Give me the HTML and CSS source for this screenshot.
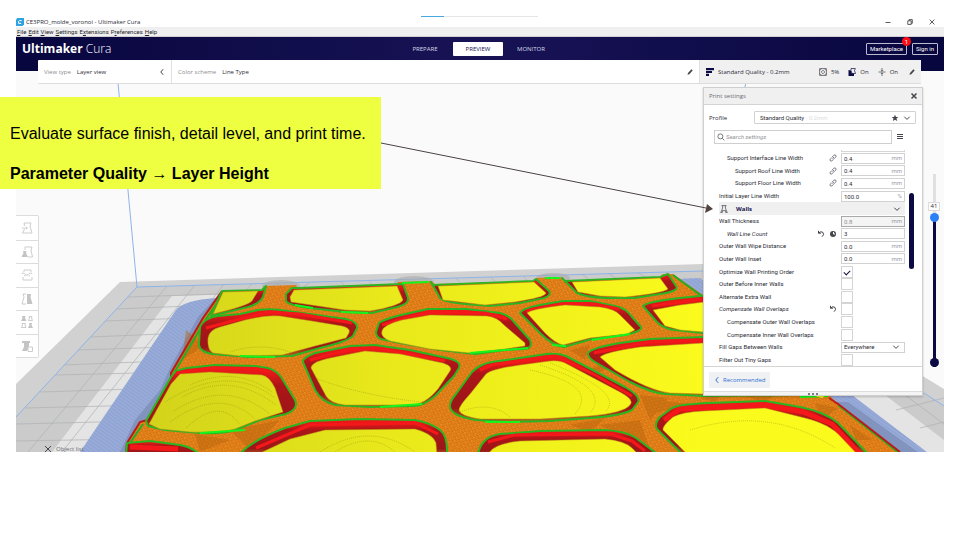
FILE: index.html
```html
<!DOCTYPE html>
<html lang="en">
<head>
<meta charset="utf-8">
<title>Ultimaker Cura – Print settings</title>
<link rel="stylesheet" href="styles.css">
</head>
<body>
<div class="slide">
  <div class="load-bar"></div>
  <div class="app">
    <div class="titlebar">
      <svg class="app-icon" viewBox="0 0 8 8"><path d="M1.5 0H8V6.500L6.500 8H0V1.500z" fill="#2ea3e0"/><path d="M5.600 2.600H3.400L2.600 3.400V5.400H5.200" fill="none" stroke="#fff"/></svg>
      <span class="window-title">CE3PRO_molde_voronoi - Ultimaker Cura</span>
      <div class="window-controls">
        <svg viewBox="0 0 6 6"><path d="M.5 3.500H5.500"/></svg>
        <svg viewBox="0 0 6 6"><path d="M.8 1.800H4.200V5.400H.8zM2 1.600V.6H5.300V4.300H4.300"/></svg>
        <svg viewBox="0 0 6 6"><path d="M.6.6 5.400 5.400M5.400.6.6 5.400"/></svg>
      </div>
    </div>
    <nav class="menubar">
      <a href="#"><u>F</u>ile</a><a href="#"><u>E</u>dit</a><a href="#"><u>V</u>iew</a><a href="#"><u>S</u>ettings</a><a href="#">E<u>x</u>tensions</a><a href="#">P<u>r</u>eferences</a><a href="#"><u>H</u>elp</a>
    </nav>
    <header class="header">
      <div class="brand"><b>Ultimaker</b> Cura</div>
      <div class="tabs">
        <button class="tab">PREPARE</button>
        <button class="tab tab-active">PREVIEW</button>
        <button class="tab">MONITOR</button>
      </div>
      <div class="account">
        <button class="outline-btn">Marketplace<span class="badge">1</span></button>
        <button class="outline-btn">Sign in</button>
      </div>
    </header>

    <main class="workspace">
      <svg class="scene" viewBox="16 71 928 381" preserveAspectRatio="xMidYMin slice" aria-hidden="true">
        <defs>
          <linearGradient id="floorTone" gradientUnits="userSpaceOnUse" x1="150" y1="400" x2="700" y2="380">
            <stop offset="0" stop-color="#d3d31b"/><stop offset=".45" stop-color="#e9e91b"/><stop offset="1" stop-color="#fafa1c"/>
          </linearGradient>
          <linearGradient id="wallTone" x1="0" y1="0" x2="0" y2="1">
            <stop offset="0" stop-color="#f41a1a"/><stop offset=".14" stop-color="#e01818"/><stop offset=".3" stop-color="#ac1518"/><stop offset=".8" stop-color="#9c1618"/><stop offset="1" stop-color="#b0701a"/>
          </linearGradient>
          <pattern id="skin" width="5" height="4" patternUnits="userSpaceOnUse" patternTransform="rotate(28)">
            <path d="M0 .5H3M2 2.500H5" stroke="#a94e08" stroke-opacity=".28"/><path d="M3 3.500H4" stroke="#ffb12c" stroke-opacity=".6"/>
          </pattern>
          <pattern id="brim" width="3" height="3" patternUnits="userSpaceOnUse" patternTransform="rotate(35)">
            <path d="M0 .5H3" stroke="#6f87c0" stroke-opacity=".25"/>
          </pattern>
          <clipPath id="bed"><path d="M137 287 703 271 738 270 944 406V452H16V417z"/></clipPath>
        </defs>
        <path class="bed-edge" d="M120 282 703 264H738L944 389V452H16V384z"/>
        <path class="bed-area" d="M137 287 703 271 738 270 944 406V452H16V417z"/>
        <g clip-path="url(#bed)">
          <path class="bed-light" d="M172 296 720 279 944 440V452H52z"/>
          <path class="bed-lines" d="M167 286 28 452M195 285 62 452M224 284 96 452M253 283 190 350M280 283 240 300M310 282 300 290M340 281 345 286M368 280 373 286M396 279 400 284M424 278 430 284M455 277 460 283M490 276 496 283M522 275 528 281M552 274 560 280M580 273 590 280M608 273 618 280M637 272 650 280M666 272 680 280M850 380 944 446M870 360 944 414M128 297 250 293M116 309 240 304M104 321 220 317M90 337 210 332M77 350 200 346M63 365 190 360M55 375 180 372M40 392 165 388M25 408 150 405M16 424 140 421M16 441 130 439M860 404 944 388M890 424 944 412M915 448 944 440"/>
        </g>
        <path class="brim" d="M80 452 176 310Q184 300 216 298L700 278 927 452z"/>
        <path class="brim-tex" d="M80 452 176 310Q184 300 216 298L700 278 927 452z"/>
        <path class="bed-light" d="M852 395H893L944 432V452H927z"/>
        <path class="bed-area" d="M885 395 944 440V406L927 395z"/>
        <path class="bed-lines" d="M905 395 944 424M896 410 944 398M920 428 944 422"/>
        <path class="brim-shade" d="M222 291 198 317 171 366 160 390 135 420 120 452H140L210 330zM838 402 848 402 918 452H900z"/>
        <path class="volume" d="M118 83 137 287M137 287 703 271M16 417 137 287M924 393 944 406M746 83 744 90"/>
        <ellipse class="post-shadow" cx="281" cy="286" rx="19" ry="6"/>
        <ellipse class="post-shadow" cx="414" cy="282" rx="20" ry="6"/>
        <ellipse class="post-shadow" cx="553" cy="278" rx="17" ry="5"/>
        <path class="body" d="M222 291 262 290 264 286 296 285 298 289 397 285 398 282 431 281 435 284 534 281 536 278 560 277 565 281 660 277 663 274 673 274 703 295 800 366 838 404 900 452H126L128 443 140 422 147 419 171 381V373L203 318z"/>
        <path class="body-skin" d="M222 291 262 290 264 286 296 285 298 289 397 285 398 282 431 281 435 284 534 281 536 278 560 277 565 281 660 277 663 274 673 274 703 295 800 366 838 404 900 452H126L128 443 140 422 147 419 171 381V373L203 318z"/>
        <path class="facets" d="M560 380 640 350 600 372zM640 395 668 398 650 420zM655 400 690 404 650 415zM640 420 600 425 650 450zM700 398 720 396 715 402zM745 396 775 396 762 402zM815 403 838 408 822 420zM850 425 872 440 856 440zM570 350 590 345 585 360zM570 425 605 418 590 432zM186 330 205 345 182 360zM195 434 230 440 200 452zM230 430 280 420 250 450z"/>
        <path class="side-red" d="M222 291 203 318 171 373V381L147 420 140 422 127 443 126 452"/>
        <path class="side-green" d="M224 293 206 319 174 373M171 382 149 421M143 424 130 443M673 275 703 297M838 405 898 452"/>
        <path class="side-red" d="M837 403 900 452M829 398 838 404"/>
        <g class="rims">
          <path d="M222 291 262 290 266 286 263 297Q259 304 248 307L211 316z"/>
          <path d="M298 288 292 288 286 294V301Q288 305 310 308L345 312 372 313 397 307Q409 304 408 298L403 284z"/>
          <path d="M431 282 440 298Q443 302 465 304L490 306 520 303 544 298Q552 295 549 291L536 279 533 281 433 285z"/>
          <path d="M562 278 577 293Q585 297 605 298L635 298 660 294Q680 291 676 286L668 274 660 277 565 281z"/>
          <path d="M199 345 200 327Q204 318 218 316L240 314 258 310Q272 308 288 311L346 319Q358 322 357 328L353 336Q346 342 320 348L292 356 250 357 212 354Q200 352 199 345z"/>
          <path d="M376 332 379 323Q386 318 410 313L428 309 467 309 500 313Q509 315 514 322L530 340Q533 348 525 349L505 350 475 354 440 350 400 343 381 339Q376 337 376 332z"/>
          <path d="M520 313Q523 308 540 305L563 301 590 301 615 306Q626 308 632 317L641 327Q643 331 625 335L592 339 564 347Q553 346 541 334z"/>
          <path d="M643 306Q646 302 680 298L720 294 780 350 703 333 675 330Q664 329 657 322z"/>
          <path d="M588 353Q591 348 620 343L650 339 703 337 780 350 800 395 703 396 665 394Q652 393 630 382L595 362Q587 357 588 353z"/>
          <path d="M171 377Q174 370 187 368L215 365 255 366 268 368Q277 371 281 377L295 400Q299 409 286 414L260 420 235 430Q223 434 200 433L165 430 148 426 146 421z"/>
          <path d="M303 362Q302 358 315 353L350 346 375 345 410 350 447 358Q462 361 459 368L454 376 435 396Q423 407 410 406L370 407 335 405Q322 402 315 390z"/>
          <path d="M450 406Q450 401 456 394L472 372Q480 364 492 362L540 355Q556 352 566 356L625 387Q641 396 638 402L632 410Q620 416 590 418L550 421 505 422 476 420Q450 416 450 406z"/>
          <path d="M238 456Q250 441 285 428L310 421 360 419 415 420Q431 423 440 430 448 436 447 456z"/>
          <path d="M478 456Q480 437 500 434L540 431 605 430Q625 431 636 438L660 456z"/>
          <path d="M684 456 657 429Q654 424 660 417L672 408Q680 404 710 403L765 401 800 407Q825 412 838 423L870 456z"/>
          <path d="M127 443 150 441 180 445Q192 447 202 456H126z"/>
        </g>
        <g class="walls-bright">
          <path d="M206 328 240 319 270 312 300 314 352 323"/>
          <path d="M382 325 410 317 432 312 485 313 507 319"/>
          <path d="M526 311 563 304 595 304 619 309"/>
          <path d="M652 306 703 299"/><path d="M594 353 650 342 705 340"/>
          <path d="M176 373 213 368 258 369 270 372"/>
          <path d="M310 360 348 350 375 348 445 361"/>
          <path d="M480 370 492 365 556 356 595 375 632 396"/>
          <path d="M256 448 310 425 415 423 438 434"/>
          <path d="M488 442 515 435 610 434 632 441 645 451"/>
          <path class="wide" d="M664 420 680 409 765 405 803 412 832 424 862 456"/>
          <path class="wide" d="M130 447 178 449"/>
        </g>
        <g class="floors">
          <path d="M223 292 258 291 252 301Q247 306 213 314z"/>
          <path d="M294 290 397 286 403 300Q400 306 370 311L345 310 291 302 290 297z"/>
          <path d="M438 286 534 282 546 293Q546 297 515 302L485 305 443 300z"/>
          <path d="M572 282 660 278 668 289Q664 293 625 297L600 296 578 292z"/>
          <path d="M208 338Q209 330 220 327L245 320Q265 315 280 316L312 321 342 326Q351 328 349 333L346 338 315 346 282 355 240 356 213 353Q207 350 208 338z"/>
          <path d="M382 331Q383 325 402 320L430 315 487 316Q497 317 504 325L525 343 525 346 505 349 470 353 430 349 390 341Q380 337 382 331z"/>
          <path d="M527 313Q531 309 565 305L600 307Q615 309 620 315L635 330 627 334 590 338 563 345Q555 343 545 333z"/>
          <path d="M653 310 680 305 720 300 770 345 703 332 680 330 665 326z"/>
          <path d="M600 357Q605 352 640 347L703 343 790 360V394H703L670 393Q650 391 615 370z"/>
          <path d="M180 374 210 372 262 375Q269 376 275 388L283 412 255 421 235 429Q220 433 190 432L160 429 149 424 171 384z"/>
          <path d="M311 368Q311 362 330 358L365 351 400 354 443 363Q453 366 450 371L438 389Q425 405 410 405L345 405Q330 403 326 396z"/>
          <path d="M459 410Q459 406 470 394L486 374Q491 369 520 365L550 361Q560 360 567 364L620 392Q635 400 630 405 624 413 590 416L540 419 480 419Q460 416 459 410z"/>
          <path d="M254 456 290 439 325 430 415 429Q433 434 436 443L437 456z"/>
          <path d="M488 456Q490 444 520 441L605 439Q625 441 632 448L640 456z"/>
          <path d="M689 456 663 430Q662 426 673 417 682 412 703 411L765 408 805 418Q830 424 841 437L859 456z"/>
        </g>
        <g class="floor-rings">
          <path d="M190 385Q235 365 272 392M182 397Q230 370 276 405M174 411Q225 378 270 414M170 422Q220 386 255 419M165 402Q228 362 275 398M186 428Q220 396 240 425M230 352Q260 342 290 352M315 378Q360 395 420 402M460 412Q490 400 510 417M320 452Q370 420 415 452M335 452Q370 430 395 452M530 370Q600 385 575 414M540 365Q612 388 590 413M550 363Q624 392 606 411M690 430Q770 405 835 448"/>
        </g>
        <path class="lime" d="M295 305 313 308M341 312 368 313M240 356 275 357M200 433 245 430M470 353 528 348M552 345 566 346M592 340 630 334M485 422 520 422M380 407 422 404M402 283 429 282M545 278 560 278M800 397 828 396"/>
        <path class="corner-yellow" d="M812 395H826L822 398z"/>
      </svg>

      <div class="toolbar">
        <button class="bar-section view-type"><span class="muted">View type</span><span>Layer view</span>
          <svg class="icon push" viewBox="0 0 8 8"><path d="M5.200 1.200 2.800 4 5.200 6.800"/></svg></button>
        <button class="bar-section color-scheme"><span class="muted">Color scheme</span><span>Line Type</span>
          <svg class="icon push" viewBox="0 0 8 8"><path class="solid" d="M1.500 6.700 2 4.900 5.400 1.300 6.700 2.600 3.300 6.200z"/></svg></button>
        <button class="bar-section quality">
          <svg class="icon navy" viewBox="0 0 8 8"><path class="solid" d="M0 0H8V2.200H0zM0 3H6V5H0zM0 5.800H3V8H0z"/></svg>
          <span class="quality-name">Standard Quality - 0.2mm</span>
          <svg class="icon" viewBox="0 0 8 8"><path class="fine" d="M.6.6H7.400V7.400H.6zM.6 2.600 2.600.6M5.400.6 7.400 2.600M.6 5.400 2.600 7.400M7.400 5.400 5.400 7.400M4 2.200 5.800 4 4 5.800 2.200 4z"/></svg><span>5%</span>
          <svg class="icon navy gap" viewBox="0 0 8 8"><path class="solid" d="M.5 2 2.800 2.600 3.800 5.500H6V8H.5z"/><path class="fine" d="M3 .5H7.300L6.500 2.500 7.500 5.500H4L3 2.500z"/></svg><span>On</span>
          <svg class="icon gap" viewBox="0 0 8 8"><path class="fine" d="M.5 4H7.500M4 0V3M2.800 2 4 3.200 5.200 2M4 8V5M2.800 6 4 4.800 5.200 6"/></svg><span>On</span>
          <svg class="icon edit" viewBox="0 0 8 8"><path class="solid" d="M1.500 6.700 2 4.900 5.400 1.300 6.700 2.600 3.300 6.200z"/></svg>
        </button>
      </div>

      <div class="columns">
        <div class="tools">
          <button aria-label="Move"><svg viewBox="0 0 12 12"><path d="M3 1H10L9 4 11 11H1.500L3.500 7M3 1 3.500 4M1 6H6M5 4.800 6.500 6 5 7.200"/></svg></button>
          <button aria-label="Scale"><svg viewBox="0 0 12 12"><path d="M4 1H11L10 4 11.500 11H7M4 1V4"/><path class="solid" d="M2 5H5.500L5 7 7 11H.5L2.500 7z"/></svg></button>
          <button aria-label="Rotate"><svg viewBox="0 0 12 12"><path d="M3 3V1H10V3M2 8V11H11V8M4 6H7M.5 5A2 1.500 0 1 1 3 7M11.500 5A2 1.500 0 1 0 9 7"/></svg></button>
          <button aria-label="Mirror"><svg viewBox="0 0 12 12"><path d="M5 1H2L3 4 1 11H5"/><path class="solid" d="M6 1H10L9.500 4 11.500 11H6z"/></svg></button>
          <button aria-label="Per model settings"><svg viewBox="0 0 12 12"><path class="solid" d="M1 0H4.500L4 2 5.500 5H0L1.500 2zM8 7H11L10.500 9 12 12H7L8.500 9z"/><path d="M8 .5H11L10.500 2 11.500 4.500H7.500L8.500 2zM1 7.500H4.500L4 9 5 11.500H.5L1.500 9z"/></svg></button>
          <button aria-label="Support blocker"><svg viewBox="0 0 12 12"><path class="solid" d="M1 1H9V3H8V7L6 11H1L3 7V3H1z"/><path class="cut" d="M7 7H11.500V11.500H7z"/></svg></button>
        </div>

        <section class="panel">
          <div class="panel-head"><h2>Print settings</h2>
            <button aria-label="Close" class="plain"><svg class="icon" viewBox="0 0 8 8"><path class="bold" d="M1.500 1.500 6.500 6.500M6.500 1.500 1.500 6.500"/></svg></button></div>
          <div class="profile-row">
            <span class="profile-label">Profile</span>
            <button class="profile-select"><span>Standard Quality <i>- 0.2mm</i></span>
              <svg class="icon push" viewBox="0 0 8 8"><path class="solid" d="M4 .8 5 3H7.400L5.500 4.600 6.200 7 4 5.700 1.800 7 2.500 4.600.6 3H3z"/></svg>
              <svg class="icon" viewBox="0 0 8 8"><path d="M1.300 2.700 4 5.400 6.700 2.700"/></svg></button>
          </div>
          <div class="search-row">
            <label class="search"><svg class="icon" viewBox="0 0 8 8"><circle cx="3.400" cy="3.400" r="2.500"/><path d="M5.300 5.300 7.400 7.400"/></svg><input type="text" aria-label="Search settings" placeholder="Search settings"></label>
            <button aria-label="Setting visibility" class="plain"><svg class="icon" viewBox="0 0 8 8"><path d="M1 1.500H7M1 3.500H7M1 5.500H7"/></svg></button>
          </div>
          <div class="list-wrap">
            <div class="clipped-field"></div>
            <div class="list">
              <div class="row in1"><label for="f1">Support Interface Line Width</label><svg class="icon" viewBox="0 0 8 8"><path class="fine" d="M3.500 4.500 5 3M3.200 3 4.800 1.300Q6 .5 6.800 1.300 7.500 2.200 6.600 3.200L5 4.800M3 3.400 1.400 5Q.6 6 1.300 6.800 2.200 7.500 3.200 6.600L4.800 5"/></svg><span class="field"><input id="f1" value="0.4"><em>mm</em></span></div>
              <div class="row in2"><label for="f2">Support Roof Line Width</label><svg class="icon" viewBox="0 0 8 8"><path class="fine" d="M3.500 4.500 5 3M3.200 3 4.800 1.300Q6 .5 6.800 1.300 7.500 2.200 6.600 3.200L5 4.800M3 3.400 1.400 5Q.6 6 1.300 6.800 2.200 7.500 3.200 6.600L4.800 5"/></svg><span class="field"><input id="f2" value="0.4"><em>mm</em></span></div>
              <div class="row in2"><label for="f3">Support Floor Line Width</label><svg class="icon" viewBox="0 0 8 8"><path class="fine" d="M3.500 4.500 5 3M3.200 3 4.800 1.300Q6 .5 6.800 1.300 7.500 2.200 6.600 3.200L5 4.800M3 3.400 1.400 5Q.6 6 1.300 6.800 2.200 7.500 3.200 6.600L4.800 5"/></svg><span class="field"><input id="f3" value="0.4"><em>mm</em></span></div>
              <div class="row"><label for="f4">Initial Layer Line Width</label><span class="field"><input id="f4" value="100.0"><em>%</em></span></div>
              <button class="category"><svg class="icon" viewBox="0 0 8 8"><path class="fine" d="M1.500.6H6.500M2.600.6V3L1 7.400M5.400.6V3L7 7.400M.4 7.400H2.400V5.600H5.600V7.400H7.600"/></svg><b>Walls</b><svg class="icon push" viewBox="0 0 8 8"><path d="M1.300 2.700 4 5.400 6.700 2.700"/></svg></button>
              <div class="row"><label for="f5">Wall Thickness</label><span class="field disabled"><input id="f5" value="0.8"><em>mm</em></span></div>
              <div class="row in1 changed"><label for="f6">Wall Line Count</label><svg class="icon" viewBox="0 0 8 8"><path d="M1.500.8V3.200H4M1.600 3Q4 .6 6 2.500 7.600 4.800 5 6.700"/></svg><svg class="icon" viewBox="0 0 8 8"><circle class="solid" cx="4" cy="4" r="3"/><path class="knock" d="M4.500 2V4H6"/></svg><span class="field"><input id="f6" value="3"></span></div>
              <div class="row"><label for="f7">Outer Wall Wipe Distance</label><span class="field"><input id="f7" value="0.0"><em>mm</em></span></div>
              <div class="row"><label for="f8">Outer Wall Inset</label><span class="field"><input id="f8" value="0.0"><em>mm</em></span></div>
              <div class="row"><label for="c1">Optimize Wall Printing Order</label><span class="slot"><input type="checkbox" id="c1" checked></span></div>
              <div class="row"><label for="c2">Outer Before Inner Walls</label><span class="slot"><input type="checkbox" id="c2"></span></div>
              <div class="row"><label for="c3">Alternate Extra Wall</label><span class="slot"><input type="checkbox" id="c3"></span></div>
              <div class="row changed"><label for="c4">Compensate Wall Overlaps</label><svg class="icon" viewBox="0 0 8 8"><path d="M1.500.8V3.200H4M1.600 3Q4 .6 6 2.500 7.600 4.800 5 6.700"/></svg><span class="slot"><input type="checkbox" id="c4"></span></div>
              <div class="row in1"><label for="c5">Compensate Outer Wall Overlaps</label><span class="slot"><input type="checkbox" id="c5"></span></div>
              <div class="row in1"><label for="c6">Compensate Inner Wall Overlaps</label><span class="slot"><input type="checkbox" id="c6"></span></div>
              <div class="row"><label for="s1">Fill Gaps Between Walls</label><span class="field"><select id="s1"><option>Everywhere</option></select><svg class="icon" viewBox="0 0 8 8"><path d="M1.300 2.700 4 5.400 6.700 2.700"/></svg></span></div>
              <div class="row"><label for="c7">Filter Out Tiny Gaps</label><span class="slot"><input type="checkbox" id="c7"></span></div>
            </div>
            <div class="scroll-thumb"></div>
          </div>
          <div class="panel-foot"><button class="recommended"><svg class="icon" viewBox="0 0 8 8"><path d="M5.200 1.200 2.800 4 5.200 6.800"/></svg>Recommended</button></div>
          <div class="grip"><span></span><span></span><span></span></div>
        </section>

        <div class="layer-slider">
          <input type="range" min="0" max="52" value="41" aria-label="Layer">
          <output>41</output>
        </div>
      </div>
      <div class="object-list"><svg class="icon" viewBox="0 0 8 8"><path d="M1 1 4 4 7 1M1 7 4 4 7 7"/></svg>Object list</div>
    </main>
  </div>

  <svg class="pointer" viewBox="0 0 960 540" aria-hidden="true"><path d="M381 143 706 208" stroke="#4b4444" stroke-width="1"/><path d="M713 209 705 213 707 204z" fill="#54423f"/></svg>
  <aside class="callout">
    <p>Evaluate surface finish, detail level, and print time.</p>
    <p><b>Parameter Quality <span class="arrow">→</span> Layer Height</b></p>
  </aside>
</div>
</body>
</html>
```
FILE: styles.css
```css
* { box-sizing: border-box; }
body { margin: 0; background: #fff; font-family: "Open Sans", sans-serif; font-size: 6px; line-height: 8px; color: #2c2c36; }
button, input, select { font: inherit; color: inherit; margin: 0; padding: 0; border: 0; background: none; border-radius: 0; }
.slide { position: relative; padding: 16px; }
.load-bar { position: absolute; left: 421px; right: 422px; top: 16px; height: 1px; background: linear-gradient(90deg, #45a9de 20%, #e6e6e6 20%); }

.icon { width: 8px; height: 8px; flex: none; fill: none; stroke: #45454e; stroke-width: 1; }
.icon .solid { fill: #45454e; stroke: none; }
.icon .bold { stroke-width: 1.500; }
.icon .fine { stroke-width: .7; }
.icon .knock { stroke: #fff; }
.navy { stroke: #0c0a45; }
.navy .solid { fill: #0c0a45; }
.push { margin-left: auto; }
.muted { color: #8b8b90; }
.plain { display: flex; }

.app { overflow: hidden; background: #fafafa; }
.titlebar { display: flex; align-items: center; height: 11px; gap: 2px; background: #fff; }
.app-icon { width: 8px; height: 8px; }
.window-controls { display: flex; gap: 16px; margin-left: auto; margin-right: 9px; }
.window-controls svg { width: 6px; height: 6px; fill: none; stroke: #333; stroke-width: .8; }
.menubar { display: flex; gap: 2px; height: 10px; padding-left: 1px; background: #efefef; border-bottom: 1px solid #d0d0d4; font-family: Roboto, sans-serif; line-height: 9px; }
.menubar a { color: #25252b; text-decoration: none; }

.header { display: grid; grid-template-columns: 1fr auto 1fr; align-items: center; height: 23px; padding: 0 6px; background: linear-gradient(90deg, #08063f, #161253 45%, #151152 60%, #08063f); color: #fff; }
.brand { font-size: 12px; line-height: 16px; font-weight: 300; }
.brand b { font-weight: 700; }
.tabs { display: flex; gap: 3px; margin-right: 4px; }
.tab { width: 50px; height: 14px; color: #d9d9e8; }
.tab-active { background: #fff; color: #14114f; border-radius: 1px; }
.account { display: flex; gap: 5px; justify-content: flex-end; }
.outline-btn { position: relative; height: 12px; padding: 0 3px; border: 1px solid #bcbcd0; border-radius: 1px; line-height: 10px; font-family: Roboto, sans-serif; }
.badge { position: absolute; right: -5px; top: -7px; width: 9px; height: 9px; border-radius: 50%; background: #fb0d12; line-height: 9px; text-align: center; }

.workspace { position: relative; padding-bottom: 56px; background: linear-gradient(#08063f 11px, #fafafa 11px); }
.scene { position: absolute; left: 0; top: 11px; width: 100%; height: calc(100% - 11px); }
.bed-edge { fill: #d1d1d1; }
.bed-area { fill: #cbcbcb; }
.bed-light { fill: #e4e4e4; }
.bed-lines { fill: none; stroke: #aeb0b4; stroke-opacity: .7; stroke-width: 1; }
.brim { fill: #98abd8; }
.brim-tex { fill: url(#brim); }
.brim-shade { fill: #7a8bb4; fill-opacity: .7; }
.volume { fill: none; stroke: #8db4ea; stroke-width: 1; }
.post-shadow { fill: #aaa; fill-opacity: .6; }
.body { fill: #e28019; }
.body-skin { fill: url(#skin); }
.facets { fill: #b5630e; fill-opacity: .45; }
.side-red { fill: none; stroke: #bb1a1a; stroke-width: 2; }
.side-green { fill: none; stroke: #1fae26; stroke-width: 2; }
.rims path { fill: url(#wallTone); stroke: #2bb521; stroke-width: 2; stroke-linejoin: round; }
.walls-bright path { fill: none; stroke: #f4181a; stroke-width: 3; stroke-linejoin: round; }
.walls-bright .wide { stroke-width: 5; }
.floors path { fill: url(#floorTone); stroke: #b98a14; stroke-width: .5; }
.floor-rings path { fill: none; stroke: #77750c; stroke-opacity: .35; stroke-width: 1; stroke-dasharray: 1 1; }
.lime { fill: none; stroke: #17f51d; stroke-width: 2; }
.corner-yellow { fill: #f4f41c; }

.toolbar { position: relative; display: flex; height: 24px; margin: 0 23px 0 22px; background: #fff; border-bottom: 1px solid #dcdcdc; border-radius: 1px; }
.bar-section { display: flex; align-items: center; gap: 6px; padding: 0 5px 0 6px; border-right: 1px solid #e0e0e0; }
.view-type { width: 134px; }
.color-scheme { flex: 1; }
.quality { width: 221px; gap: 4px; background: #f0f0f0; border: 0; }
.quality-name { flex: 1; text-align: left; }
.gap { margin-left: 5px; }
.edit { margin-left: 6px; }

.columns { position: relative; display: flex; align-items: flex-start; }
.tools { display: grid; grid-auto-rows: 1fr; width: 23px; height: 143px; margin-top: 131px; border: 1px solid #dcdcdc; border-left: 0; border-radius: 0 2px 2px 0; background: #fff; }
.tools button { display: grid; place-items: center; }
.tools button + button { border-top: 1px solid #dcdcdc; }
.tools svg { width: 12px; height: 12px; fill: none; stroke: #cdcdcd; stroke-width: 1; }
.tools .solid { fill: #c4c4c4; stroke: none; }
.tools .cut { fill: #fff; }

.panel { width: 220px; margin: 3px 5px 0 auto; background: #fff; border: 1px solid #cfcfcf; box-shadow: 0 1px 2px #0003; }
.panel-head { display: flex; align-items: center; justify-content: space-between; height: 17px; padding: 0 4px 0 5px; background: #f0f0f0; border-bottom: 1px solid #d4d4d4; }
.panel-head h2 { margin: 0; font-size: 6px; font-weight: 400; color: #6b6b72; }
.profile-row { display: flex; align-items: center; height: 25px; padding: 0 6px 0 5px; }
.profile-label { width: 45px; }
.profile-select { display: flex; flex: 1; align-items: center; gap: 4px; height: 13px; padding: 0 4px 0 5px; border: 1px solid #d2d2d2; border-radius: 1px; font-family: Roboto, sans-serif; }
.profile-select i { font-style: normal; color: #ddd; }
.search-row { display: flex; align-items: center; gap: 4px; padding: 0 18px 0 10px; }
.search { display: flex; flex: 1; align-items: center; gap: 1px; height: 14px; padding: 0 2px; border: 1px solid #cfcfcf; }
.search .icon { stroke: #777; }
.search input { flex: 1; min-width: 0; font-style: italic; font-family: Roboto, sans-serif; }
.search input::placeholder { color: #929297; }

.list-wrap { display: grid; grid-template-columns: 1fr 5px; column-gap: 4px; margin-top: 6px; padding: 0 8px 0 15px; border-bottom: 1px solid #d4d4d4; font-family: Roboto, sans-serif; }
.clipped-field { grid-column: 1; justify-self: end; width: 64px; height: 2px; border: 1px solid #d6d6d6; border-top: 0; }
.list { grid-column: 1; display: grid; grid-auto-rows: 1fr; height: 214px; }
.row { display: flex; align-items: center; gap: 2px; min-height: 0; }
.row label { flex: 1; white-space: nowrap; }
.row > .icon { margin-right: 2px; }
.in1 { padding-left: 8px; }
.in2 { padding-left: 16px; }
.changed label { font-style: italic; }
.field { display: flex; align-items: center; width: 64px; height: 11px; padding: 0 2px; border: 1px solid #d2d2d2; background: #fff; }
.field input { flex: 1; min-width: 0; height: 9px; }
.field em { font-style: normal; color: #9b9b9f; }
.field .icon { margin-right: 2px; }
.field select { flex: 1; appearance: none; outline: 0; }
.disabled { background: #f4f4f4; border-color: #a9a9a9; color: #909096; }
.slot { width: 64px; height: 12px; }
.slot input { display: block; appearance: none; width: 12px; height: 12px; border: 1px solid #d4d4d4; background: #fff; }
.slot input:checked::after { content: ""; display: block; width: 5px; height: 3px; margin: 3px 2px; border: solid #16163f; border-width: 0 0 1px 1px; transform: rotate(-45deg); }
.category { display: flex; align-items: center; gap: 8px; padding: 0 4px 0 1px; background: #f0f0f0; color: #17154f; font-family: "Open Sans", sans-serif; }
.scroll-thumb { grid-column: 2; grid-row: 1 / span 2; height: 76px; margin-top: 43px; border-radius: 3px; background: #0c0a45; }
.panel-foot { padding: 5px 5px 3px; }
.recommended { display: flex; align-items: center; gap: 2px; height: 16px; padding: 0 5px 0 4px; background: #f0f1f2; color: #2f6fd6; border-radius: 1px; }
.recommended .icon { stroke: #2f6fd6; }
.grip { display: flex; justify-content: center; align-items: center; gap: 2px; height: 4px; border-top: 1px solid #dcdcdc; background: #f4f4f4; }
.grip span { width: 2px; height: 2px; border-radius: 50%; background: #55555c; }

.layer-slider { position: relative; width: 12px; height: 193px; margin: 90px 4px 0 0; }
.layer-slider input { display: block; appearance: none; writing-mode: vertical-lr; direction: rtl; width: 12px; height: 193px; background: linear-gradient(#e0e0e0 43px, #0c0a45 43px) center / 3px 100% no-repeat; }
.layer-slider input::-webkit-slider-thumb { appearance: none; width: 9px; height: 9px; border-radius: 50%; background: #2c80f5; }
.layer-slider::after { content: ""; position: absolute; left: 2px; bottom: 0; width: 9px; height: 9px; border-radius: 50%; background: #0c0a45; }
.layer-slider output { position: absolute; left: 0; top: 28px; width: 12px; height: 9px; border: 1px solid #dcdcdc; background: #fff; line-height: 7px; text-align: center; }

.object-list { position: absolute; left: 28px; bottom: -1px; display: flex; align-items: center; gap: 4px; color: #6c6c72; }

.pointer { position: absolute; left: 0; top: 0; width: 100%; pointer-events: none; fill: none; }
.callout { position: absolute; left: 0; top: 97px; width: 381px; padding: 27px 10px 5px; background: #eeff41; color: #000; font-family: "Liberation Sans", sans-serif; font-size: 16px; line-height: 20px; }
.callout p { margin: 0; white-space: nowrap; }
.callout p + p { margin-top: 20px; }
.arrow { font-family: "Liberation Serif", serif; font-weight: 400; }
```
